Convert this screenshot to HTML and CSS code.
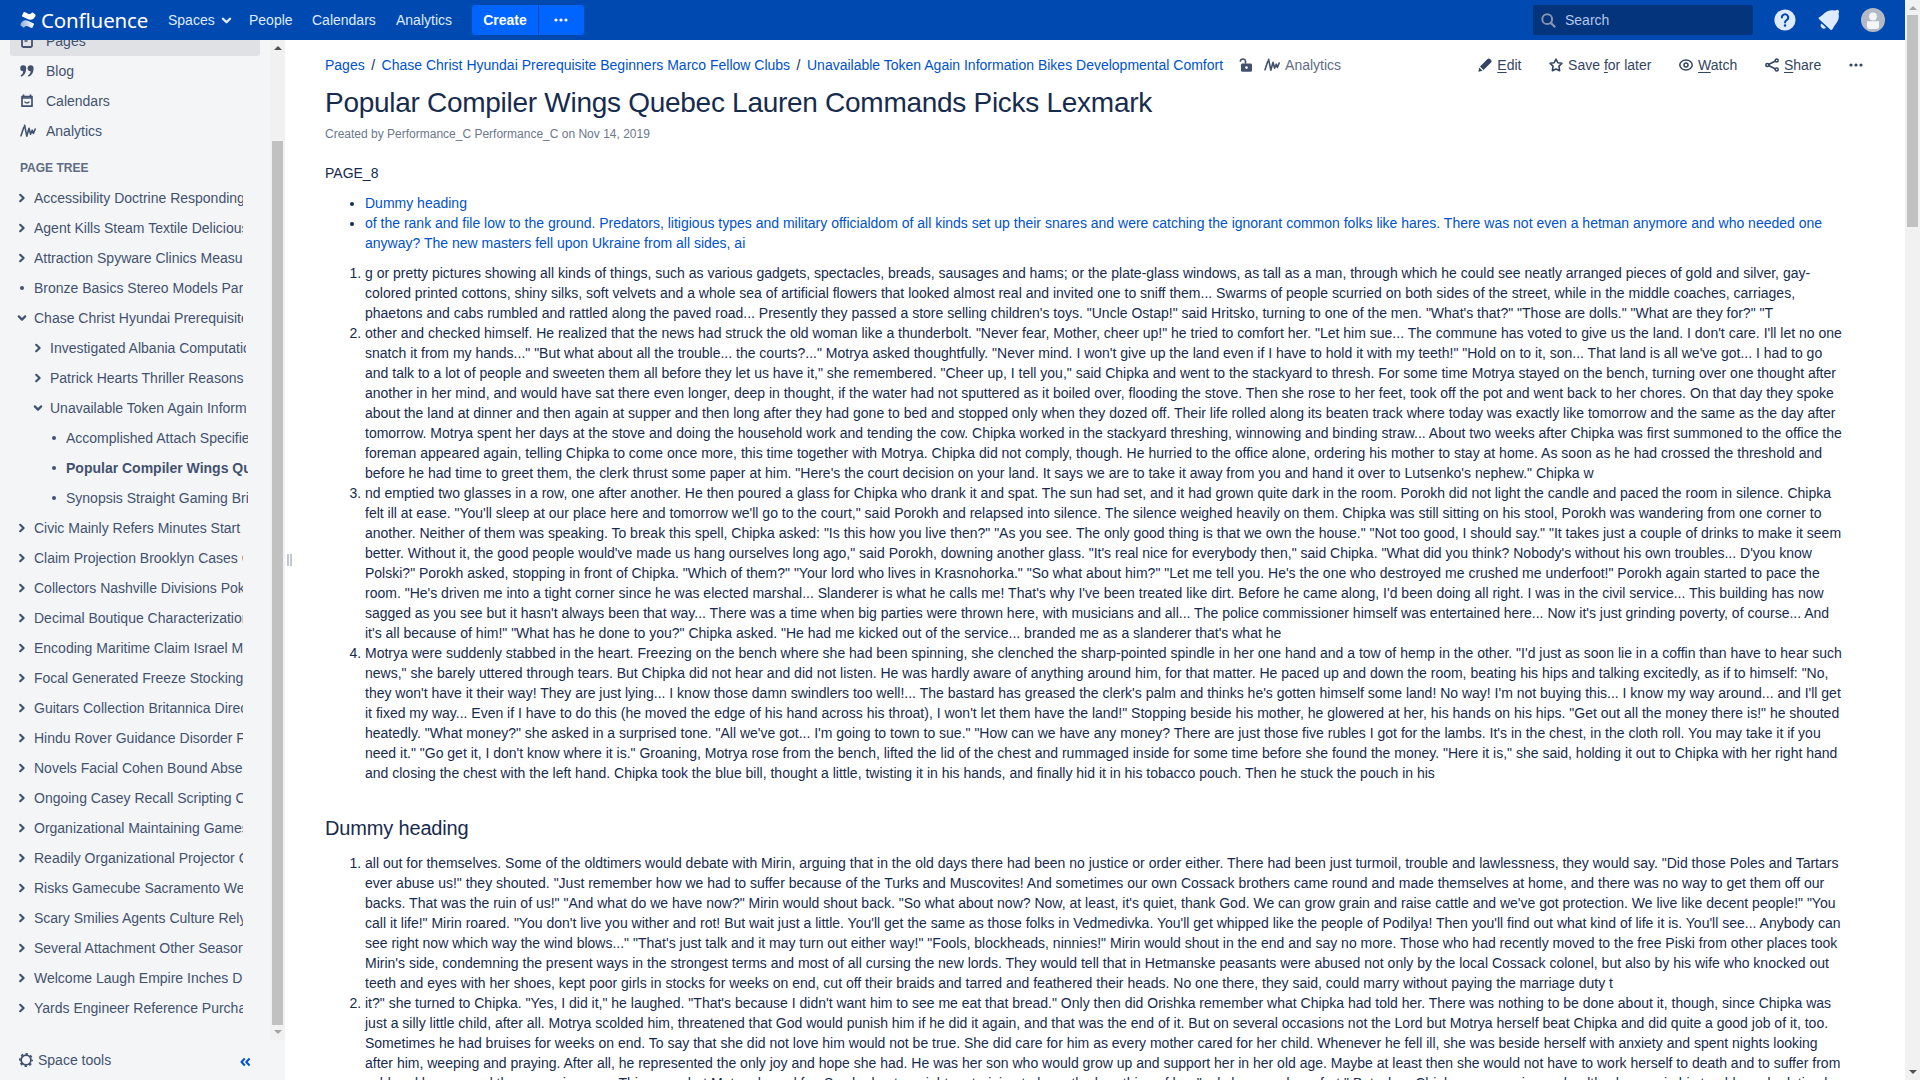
FILE: index.html
```html
<!DOCTYPE html>
<html lang="en">
<head>
<meta charset="utf-8">
<title>Popular Compiler Wings Quebec Lauren Commands Picks Lexmark - Confluence</title>
<link rel="stylesheet" href="styles.css">
</head>
<body>
<svg class="defs" width="0" height="0">
  <symbol id="chev-right" viewBox="0 0 10 10"><path d="M3.200 1.800 6.600 5 3.200 8.200" fill="none" stroke="currentColor" stroke-width="2.200" stroke-linecap="round" stroke-linejoin="round"/></symbol>
  <symbol id="chev-down" viewBox="0 0 10 10"><path d="M1.800 3.400 5 6.600 8.200 3.400" fill="none" stroke="currentColor" stroke-width="2.200" stroke-linecap="round" stroke-linejoin="round"/></symbol>
  <symbol id="dot" viewBox="0 0 10 10"><circle cx="5" cy="5" r="2" fill="currentColor"/></symbol>
  <symbol id="more" viewBox="0 0 14 14"><circle cx="2" cy="7" r="1.600" fill="currentColor"/><circle cx="7" cy="7" r="1.600" fill="currentColor"/><circle cx="12" cy="7" r="1.600" fill="currentColor"/></symbol>
  <symbol id="pulse" viewBox="0 0 16 16"><path d="M1 12.800 3.800 4.200M4.600 2.200 6.800 13.200 9 5.200 10.600 11.200 12.200 7.200 13.400 10.400 15.200 6" fill="none" stroke="currentColor" stroke-width="1.600" stroke-linecap="round" stroke-linejoin="round"/></symbol>
</svg>
<div class="app">
  <div class="window">
    <header class="header">
      <div class="logo">
        <svg width="16" height="18" viewBox="0 0 16 18">
          <defs>
            <linearGradient id="g1" x1="1" y1="0" x2="0" y2="0"><stop offset="0" stop-color="#fff"/><stop offset="1" stop-color="#fff" stop-opacity=".55"/></linearGradient>
          </defs>
          <path d="M.6 12.700C2.900 9 5.300 8.400 9 10.200L13.700 12.400Q14.300 12.700 14 13.300L12.400 16.700Q12.100 17.200 11.500 17C7.500 15.200 6 13.800 4.300 16.200Q3.900 16.800 3.300 16.500L.7 14.500Q.2 14 .6 13Z" fill="url(#g1)"/>
          <path d="M15.400 5.300C13.100 9 10.700 9.600 7 7.800L2.300 5.600Q1.700 5.300 2 4.700L3.600 1.300Q3.900.8 4.500 1C8.500 2.800 10 4.200 11.700 1.800Q12.100 1.200 12.700 1.500L15.300 3.500Q15.800 4 15.400 5Z" fill="#fff"/>
        </svg>
        <span class="wordmark">Confluence</span>
      </div>
      <nav class="nav">
        <a class="nav-spaces">Spaces <svg width="11" height="11"><use href="#chev-down"/></svg></a>
        <a class="nav-people">People</a>
        <a class="nav-calendars">Calendars</a>
        <a>Analytics</a>
      </nav>
      <div class="create"><button class="create-main">Create</button><button class="create-more"><svg width="14" height="14"><use href="#more"/></svg></button></div>
      <div class="search">
        <svg width="15" height="15" viewBox="0 0 15 15"><circle cx="6.200" cy="6.200" r="4.900" fill="none" stroke="#8793ae" stroke-width="2"/><path d="M9.800 9.800 13.500 13.500" stroke="#8793ae" stroke-width="2.400" stroke-linecap="round"/></svg>
        <span>Search</span>
      </div>
      <svg class="help" width="22" height="22" viewBox="0 0 22 22"><circle cx="11" cy="11" r="10.600" fill="#deebff"/><path d="M7.900 8.500a3.150 3.150 0 1 1 4.700 2.700c-1.100.7-1.550 1.100-1.550 2.400" fill="none" stroke="#0049b0" stroke-width="2" stroke-linecap="round"/><circle cx="11" cy="16.400" r="1.250" fill="#0049b0"/></svg>
      <svg class="bell" width="22" height="22" viewBox="0 0 22 22"><path d="M.8 8.600C6 5.600 8 1 14.500 1.200L17.600 1.600Q19.500.2 20.600 1.500 21.600 2.600 20.500 4.400C22.200 11.500 17.500 14 14.400 20.300Q13.500 21.800 12.200 20.500L1.200 10.200Q.2 9.200.8 8.600Z" fill="#deebff"/><path d="M3.600 14.600 8 18.700A2.700 2.700 0 0 1 3.600 14.600Z" fill="#deebff"/></svg>
      <svg class="avatar" width="24" height="24" viewBox="0 0 24 24"><circle cx="12" cy="12" r="12" fill="#b3bac5"/><circle cx="12" cy="8.500" r="3.900" fill="#f4f5f7"/><path d="M6 13.200h12v5q0 2.800-2.800 2.800H8.800Q6 21 6 18.200Z" fill="#f4f5f7"/></svg>
    </header>

    <div class="body">
      <aside class="sidebar">
        <div class="side-main">
          <div class="side-content">
            <div class="side-item active"><svg width="14" height="14" viewBox="0 0 14 14"><rect x="2" y="1" width="10" height="12" rx="1.200" fill="none" stroke="currentColor" stroke-width="1.800"/><path d="M4.500 4.200h5M4.500 7h3" stroke="currentColor" stroke-width="1.500"/></svg>Pages</div>
            <div class="side-item"><svg width="14" height="14" viewBox="0 0 14 14"><path d="M3.200 1.200a3 3 0 0 1 3 3C6.200 8.500 4.400 11.600 1.200 12.800L.5 11.600C2.200 10.600 3.100 9.200 3.200 7.200a3 3 0 0 1 0-6zM10.600 1.200a3 3 0 0 1 3 3c0 4.300-1.800 7.400-5 8.600l-.7-1.200c1.700-1 2.600-2.400 2.700-4.400a3 3 0 0 1 0-6z" fill="currentColor"/></svg>Blog</div>
            <div class="side-item"><svg width="14" height="14" viewBox="0 0 14 14"><path d="M2 2.600h10v9.600H2z" fill="none" stroke="currentColor" stroke-width="1.700" stroke-linejoin="round"/><path d="M2 4h10M3.500.6v2M10.500.6v2" stroke="currentColor" stroke-width="1.700"/><path d="M4.500 7.600q2.500 2.800 5 0" fill="none" stroke="currentColor" stroke-width="1.400"/></svg>Calendars</div>
            <div class="side-item wide"><svg width="16" height="16"><use href="#pulse"/></svg>Analytics</div>
            <h5 class="tree-title">PAGE TREE</h5>
            <ul class="tree">
              <li><svg><use href="#chev-right"/></svg><span>Accessibility Doctrine Responding</span></li>
              <li><svg><use href="#chev-right"/></svg><span>Agent Kills Steam Textile Delicious</span></li>
              <li><svg><use href="#chev-right"/></svg><span>Attraction Spyware Clinics Measu</span></li>
              <li><svg><use href="#dot"/></svg><span>Bronze Basics Stereo Models Par</span></li>
              <li><svg><use href="#chev-down"/></svg><span>Chase Christ Hyundai Prerequisite</span></li>
              <li class="l1"><svg><use href="#chev-right"/></svg><span>Investigated Albania Computation</span></li>
              <li class="l1"><svg><use href="#chev-right"/></svg><span>Patrick Hearts Thriller Reasons</span></li>
              <li class="l1"><svg><use href="#chev-down"/></svg><span>Unavailable Token Again Inform</span></li>
              <li class="l2"><svg><use href="#dot"/></svg><span>Accomplished Attach Specifie</span></li>
              <li class="l2 current"><svg><use href="#dot"/></svg><span>Popular Compiler Wings Quebec</span></li>
              <li class="l2"><svg><use href="#dot"/></svg><span>Synopsis Straight Gaming Bri</span></li>
              <li><svg><use href="#chev-right"/></svg><span>Civic Mainly Refers Minutes Start</span></li>
              <li><svg><use href="#chev-right"/></svg><span>Claim Projection Brooklyn Cases C</span></li>
              <li><svg><use href="#chev-right"/></svg><span>Collectors Nashville Divisions Pok</span></li>
              <li><svg><use href="#chev-right"/></svg><span>Decimal Boutique Characterization</span></li>
              <li><svg><use href="#chev-right"/></svg><span>Encoding Maritime Claim Israel M</span></li>
              <li><svg><use href="#chev-right"/></svg><span>Focal Generated Freeze Stocking</span></li>
              <li><svg><use href="#chev-right"/></svg><span>Guitars Collection Britannica Direc</span></li>
              <li><svg><use href="#chev-right"/></svg><span>Hindu Rover Guidance Disorder F</span></li>
              <li><svg><use href="#chev-right"/></svg><span>Novels Facial Cohen Bound Abse</span></li>
              <li><svg><use href="#chev-right"/></svg><span>Ongoing Casey Recall Scripting C</span></li>
              <li><svg><use href="#chev-right"/></svg><span>Organizational Maintaining Games</span></li>
              <li><svg><use href="#chev-right"/></svg><span>Readily Organizational Projector C</span></li>
              <li><svg><use href="#chev-right"/></svg><span>Risks Gamecube Sacramento We</span></li>
              <li><svg><use href="#chev-right"/></svg><span>Scary Smilies Agents Culture Rely</span></li>
              <li><svg><use href="#chev-right"/></svg><span>Several Attachment Other Season</span></li>
              <li><svg><use href="#chev-right"/></svg><span>Welcome Laugh Empire Inches D</span></li>
              <li><svg><use href="#chev-right"/></svg><span>Yards Engineer Reference Purcha</span></li>
            </ul>
          </div>
          <div class="scrollbar side-scroll"><i class="up dark"></i><b></b><i class="down"></i></div>
        </div>
        <div class="side-footer">
          <svg width="14" height="14" viewBox="0 0 14 14"><circle cx="7" cy="7" r="4.900" fill="none" stroke="currentColor" stroke-width="1.800"/><circle cx="7" cy="7" r="6.100" fill="none" stroke="currentColor" stroke-width="1.800" stroke-dasharray="2.400 2.390" stroke-dashoffset="1.200"/></svg>
          <span>Space tools</span>
          <svg class="collapse" width="11" height="10" viewBox="0 0 11 10"><path d="M4.800 1.500 1.500 5l3.300 3.500M9.600 1.500 6.300 5l3.300 3.500" fill="none" stroke="#0052cc" stroke-width="2" stroke-linejoin="round"/></svg>
        </div>
      </aside>
      <div class="grip"><i></i><i></i></div>

      <main class="content">
        <div class="topline">
          <div class="crumbs"><a>Pages</a><em>/</em><a>Chase Christ Hyundai Prerequisite Beginners Marco Fellow Clubs</a><em>/</em><a>Unavailable Token Again Information Bikes Developmental Comfort</a></div>
          <svg class="lock" width="14" height="14" viewBox="0 0 14 14"><rect x="2" y="5.600" width="11" height="8.200" rx="1.400" fill="currentColor"/><path d="M1.300 3.800C1.300.3 6.500.2 6.500 3.300v2.500" fill="none" stroke="currentColor" stroke-width="1.600"/><circle cx="7.500" cy="9.600" r="1.300" fill="#fff"/></svg>
          <svg class="pulse" width="16" height="16"><use href="#pulse"/></svg>
          <span class="analytics">Analytics</span>
          <div class="actions">
            <a><svg width="14" height="14" viewBox="0 0 14 14"><path d="M.3 13.700 1.300 9.500 4.500 12.700ZM2 8.500 9.500 1Q10.800-.2 12 1L13 2Q14.200 3.200 13 4.500L5.500 12Z" fill="currentColor"/></svg><span><u>E</u>dit</span></a>
            <a><svg width="14" height="14" viewBox="0 0 14 14"><path d="M7 1.200 8.800 4.700 12.900 5.300 10 8.100 10.600 12.700 7 11 3.400 12.700 4 8.100 1.100 5.300 5.200 4.700Z" fill="none" stroke="currentColor" stroke-width="1.600" stroke-linejoin="round"/></svg><span>Save <u>f</u>or later</span></a>
            <a><svg width="14" height="14" viewBox="0 0 14 14"><ellipse cx="7" cy="7" rx="6.200" ry="4.900" fill="none" stroke="currentColor" stroke-width="1.500"/><circle cx="7" cy="7" r="2" fill="none" stroke="currentColor" stroke-width="1.500"/></svg><span><u>W</u>atch</span></a>
            <a><svg width="14" height="14" viewBox="0 0 14 14"><path d="M11.500 2.500 2.500 7l9 4.500" fill="none" stroke="currentColor" stroke-width="1.600"/><g fill="#fff" stroke="currentColor" stroke-width="1.500"><circle cx="11.700" cy="2.400" r="1.500"/><circle cx="2.300" cy="7" r="1.500"/><circle cx="11.700" cy="11.600" r="1.500"/></g></svg><span><u>S</u>hare</span></a>
            <a><svg width="14" height="14"><use href="#more"/></svg></a>
          </div>
        </div>
        <h1>Popular Compiler Wings Quebec Lauren Commands Picks Lexmark</h1>
        <p class="meta">Created by Performance_C Performance_C on Nov 14, 2019</p>
        <p class="page-no">PAGE_8</p>
        <ul class="toc">
          <li><a>Dummy heading</a></li>
          <li><a>of the rank and file low to the ground. Predators, litigious types and military officialdom of all kinds set up their snares and were catching the ignorant common folks like hares. There was not even a hetman anymore and who needed one anyway? The new masters fell upon Ukraine from all sides, ai</a></li>
        </ul>
        <ol>
          <li>g or pretty pictures showing all kinds of things, such as various gadgets, spectacles, breads, sausages and hams; or the plate-glass windows, as tall as a man, through which he could see neatly arranged pieces of gold and silver, gay-colored printed cottons, shiny silks, soft velvets and a whole sea of artificial flowers that looked almost real and invited one to sniff them... Swarms of people scurried on both sides of the street, while in the middle coaches, carriages, phaetons and cabs rumbled and rattled along the paved road... Presently they passed a store selling children's toys. "Uncle Ostap!" said Hritsko, turning to one of the men. "What's that?" "Those are dolls." "What are they for?" "T</li>
          <li>other and checked himself. He realized that the news had struck the old woman like a thunderbolt. "Never fear, Mother, cheer up!" he tried to comfort her. "Let him sue... The commune has voted to give us the land. I don't care. I'll let no one snatch it from my hands..." "But what about all the trouble... the courts?..." Motrya asked thoughtfully. "Never mind. I won't give up the land even if I have to hold it with my teeth!" "Hold on to it, son... That land is all we've got... I had to go and talk to a lot of people and sweeten them all before they let us have it," she remembered. "Cheer up, I tell you," said Chipka and went to the stackyard to thresh. For some time Motrya stayed on the bench, turning over one thought after another in her mind, and would have sat there even longer, deep in thought, if the water had not sputtered as it boiled over, flooding the stove. Then she rose to her feet, took off the pot and went back to her chores. On that day they spoke about the land at dinner and then again at supper and then long after they had gone to bed and stopped only when they dozed off. Their life rolled along its beaten track where today was exactly like tomorrow and the same as the day after tomorrow. Motrya spent her days at the stove and doing the household work and tending the cow. Chipka worked in the stackyard threshing, winnowing and binding straw... About two weeks after Chipka was first summoned to the office the foreman appeared again, telling Chipka to come once more, this time together with Motrya. Chipka did not comply, though. He hurried to the office alone, ordering his mother to stay at home. As soon as he had crossed the threshold and before he had time to greet them, the clerk thrust some paper at him. "Here's the court decision on your land. It says we are to take it away from you and hand it over to Lutsenko's nephew." Chipka w</li>
          <li>nd emptied two glasses in a row, one after another. He then poured a glass for Chipka who drank it and spat. The sun had set, and it had grown quite dark in the room. Porokh did not light the candle and paced the room in silence. Chipka felt ill at ease. "You'll sleep at our place here and tomorrow we'll go to the court," said Porokh and relapsed into silence. The silence weighed heavily on them. Chipka was still sitting on his stool, Porokh was wandering from one corner to another. Neither of them was speaking. To break this spell, Chipka asked: "Is this how you live then?" "As you see. The only good thing is that we own the house." "Not too good, I should say." "It takes just a couple of drinks to make it seem better. Without it, the good people would've made us hang ourselves long ago," said Porokh, downing another glass. "It's real nice for everybody then," said Chipka. "What did you think? Nobody's without his own troubles... D'you know Polski?" Porokh asked, stopping in front of Chipka. "Which of them?" "Your lord who lives in Krasnohorka." "So what about him?" "Let me tell you. He's the one who destroyed me crushed me underfoot!" Porokh again started to pace the room. "He's driven me into a tight corner since he was elected marshal... Slanderer is what he calls me! That's why I've been treated like dirt. Before he came along, I'd been doing all right. I was in the civil service... This building has now sagged as you see but it hasn't always been that way... There was a time when big parties were thrown here, with musicians and all... The police commissioner himself was entertained here... Now it's just grinding poverty, of course... And it's all because of him!" "What has he done to you?" Chipka asked. "He had me kicked out of the service... branded me as a slanderer that's what he</li>
          <li>Motrya were suddenly stabbed in the heart. Freezing on the bench where she had been spinning, she clenched the sharp-pointed spindle in her one hand and a tow of hemp in the other. "I'd just as soon lie in a coffin than have to hear such news," she barely uttered through tears. But Chipka did not hear and did not listen. He was hardly aware of anything around him, for that matter. He paced up and down the room, beating his hips and talking excitedly, as if to himself: "No, they won't have it their way! They are just lying... I know those damn swindlers too well!... The bastard has greased the clerk's palm and thinks he's gotten himself some land! No way! I'm not buying this... I know my way around... and I'll get it fixed my way... Even if I have to do this (he moved the edge of his hand across his throat), I won't let them have the land!" Stopping beside his mother, he glowered at her, his hands on his hips. "Get out all the money there is!" he shouted heatedly. "What money?" she asked in a surprised tone. "All we've got... I'm going to town to sue." "How can we have any money? There are just those five rubles I got for the lambs. It's in the chest, in the cloth roll. You may take it if you need it." "Go get it, I don't know where it is." Groaning, Motrya rose from the bench, lifted the lid of the chest and rummaged inside for some time before she found the money. "Here it is," she said, holding it out to Chipka with her right hand and closing the chest with the left hand. Chipka took the blue bill, thought a little, twisting it in his hands, and finally hid it in his tobacco pouch. Then he stuck the pouch in his</li>
        </ol>
        <h2>Dummy heading</h2>
        <ol>
          <li>all out for themselves. Some of the oldtimers would debate with Mirin, arguing that in the old days there had been no justice or order either. There had been just turmoil, trouble and lawlessness, they would say. "Did those Poles and Tartars ever abuse us!" they shouted. "Just remember how we had to suffer because of the Turks and Muscovites! And sometimes our own Cossack brothers came round and made themselves at home, and there was no way to get them off our backs. That was the ruin of us!" "And what do we have now?" Mirin would shout back. "So what about now? Now, at least, it's quiet, thank God. We can grow grain and raise cattle and we've got protection. We live like decent people!" "You call it life!" Mirin roared. "You don't live you wither and rot! But wait just a little. You'll get the same as those folks in Vedmedivka. You'll get whipped like the people of Podilya! Then you'll find out what kind of life it is. You'll see... Anybody can see right now which way the wind blows..." "That's just talk and it may turn out either way!" "Fools, blockheads, ninnies!" Mirin would shout in the end and say no more. Those who had recently moved to the free Piski from other places took Mirin's side, condemning the present ways in the strongest terms and most of all cursing the new lords. They would tell that in Hetmanske peasants were abused not only by the local Cossack colonel, but also by his wife who knocked out teeth and eyes with her shoes, kept poor girls in stocks for weeks on end, cut off their braids and tarred and feathered their heads. No one there, they said, could marry without paying the marriage duty t</li>
          <li>it?" she turned to Chipka. "Yes, I did it," he laughed. "That's because I didn't want him to see me eat that bread." Only then did Orishka remember what Chipka had told her. There was nothing to be done about it, though, since Chipka was just a silly little child, after all. Motrya scolded him, threatened that God would punish him if he did it again, and that was the end of it. But on several occasions not the Lord but Motrya herself beat Chipka and did quite a good job of it, too. Sometimes he had bruises for weeks on end. To say that she did not love him would not be true. She did care for him as every mother cared for her child. Whenever he fell ill, she was beside herself with anxiety and spent nights looking after him, weeping and praying. After all, he represented the only joy and hope she had. He was her son who would grow up and support her in her old age. Maybe at least then she would not have to work herself to death and to suffer from cold and hunger and the unsparing woe. This was what Motrya hoped for. So she kept on right on training to keep the breathing of her "only hope and comfort." But when Chipka was growing up healthy, he was in his trouble and relation he would lead</li>
        </ol>
      </main>
    </div>
  </div>
  <div class="scrollbar page-scroll"><i class="up"></i><b></b><i class="down dark"></i></div>
</div>
</body>
</html>
```
FILE: styles.css
```css
* { box-sizing: border-box; }
html, body { margin: 0; height: 100%; overflow: hidden; }
body {
  font: 14px/20px "Liberation Sans", Arial, sans-serif;
  color: #172b4d;
  background: #fff;
}
.defs { position: absolute; }
svg { display: block; flex: none; }
.app { display: flex; height: 1080px; width: 1920px; }
.window { flex: 1; min-width: 0; display: flex; flex-direction: column; }

.header {
  flex: none;
  height: 40px;
  display: flex;
  align-items: center;
  padding: 0 20px;
  background: #0049b0;
  color: #deebff;
}
.logo { display: flex; align-items: center; gap: 5px; width: 148px; color: #fff; }
.wordmark { font: 20.5px/24px "Noto Sans", sans-serif; letter-spacing: -0.15px; margin-top: -1px; }
.nav { display: flex; width: 304px; white-space: nowrap; }
.nav-spaces { display: flex; align-items: center; gap: 6px; width: 81px; }
.nav-people { width: 63px; }
.nav-calendars { width: 84px; }
.create { display: flex; gap: 1px; }
.create button {
  border: 0;
  padding: 0;
  height: 30px;
  background: #0065ff;
  color: #fff;
  font: bold 14px/20px "Liberation Sans", Arial, sans-serif;
  display: flex;
  align-items: center;
  justify-content: center;
}
.create .create-main { width: 66px; border-radius: 3px 0 0 3px; }
.create .create-more { width: 45px; border-radius: 0 3px 3px 0; padding-right: 2px; }
.search {
  margin-left: auto;
  width: 220px;
  height: 30px;
  border-radius: 3px;
  background: #04347c;
  display: flex;
  align-items: center;
  gap: 9px;
  padding-left: 8px;
  color: #b3c8ea;
}
.help { margin-left: 21px; }
.bell { margin-left: 22px; }
.avatar { margin-left: 21px; }

.body { flex: 1; min-height: 0; display: flex; }
.sidebar { width: 285px; background: #f4f5f7; color: #42526e; display: flex; flex-direction: column; }
.side-main { height: 1000px; display: flex; overflow: hidden; }
.side-content { width: 270px; height: 1000px; overflow: hidden; display: flex; flex-direction: column; justify-content: flex-end; padding-bottom: 17px; }
.side-item { flex: none; display: flex; align-items: center; gap: 12px; height: 30px; margin: 0 10px; padding-left: 10px; border-radius: 3px; }
.side-item.wide { gap: 10px; }
.side-item.active { background: #dfe1e5; }
.tree-title { margin: 12px 0 5px 20px; font-size: 12px; line-height: 20px; color: #5e6c84; }
.tree { list-style: none; margin: 0; padding: 0; }
.tree li { height: 30px; display: flex; align-items: center; padding-left: 17px; gap: 7px; }
.tree svg { width: 10px; height: 10px; }
.tree span { width: 209px; overflow: hidden; white-space: nowrap; }
.tree .l1 { padding-left: 33px; }
.tree .l1 span { width: 196px; }
.tree .l2 { padding-left: 49px; }
.tree .l2 span { width: 182px; }
.tree .current { font-weight: bold; }
.side-footer { height: 40px; display: flex; align-items: center; padding-left: 19px; gap: 5px; }
.side-footer .collapse { margin: 4px 34px 0 auto; }

.scrollbar { width: 15px; background: #f1f1f1; display: flex; flex-direction: column; align-items: center; }
.scrollbar b { width: 11px; background: #c1c1c1; }
.scrollbar i { border: 4px solid transparent; width: 0; height: 0; }
.scrollbar .up { border-top: 0; border-bottom-color: #a3a3a3; margin-top: 6px; }
.scrollbar .down { border-bottom: 0; border-top-color: #a3a3a3; margin: auto 0 6px; }
.scrollbar .up.dark { border-bottom-color: #505050; }
.scrollbar .down.dark { border-top-color: #505050; }
.side-scroll b { height: 884px; margin-top: 91px; }
.page-scroll b { height: 212px; margin-top: 5px; }

.grip { width: 10px; display: flex; gap: 1px; align-self: flex-start; padding: 514px 0 0 2px; }
.grip i { width: 2px; height: 12px; background: #c1c7d0; }

.content { flex: 1; min-width: 0; padding: 13px 60px 0 30px; overflow: hidden; height: 1040px; }
a { color: #0052cc; }
.header a { color: inherit; }
.topline { display: flex; align-items: center; height: 24px; margin-right: -18px; white-space: nowrap; }
.crumbs em { font-style: normal; margin: 0 6.5px; }
.lock { margin-left: 16px; color: #42526e; }
.pulse { margin-left: 11px; color: #42526e; }
.analytics { margin-left: 5px; color: #5e6c84; }
.actions { margin-left: auto; display: flex; gap: 27.7px; }
.actions a { display: flex; align-items: center; gap: 5px; color: #344563; }
.actions u { text-underline-offset: 2px; }
h1 { margin: 10px 0 0; font-size: 28px; line-height: 32px; font-weight: normal; letter-spacing: -0.01em; }
.meta { margin: 5px 0 0; font-size: 12px; line-height: 20px; color: #6b778c; }
.page-no { margin: 19px 0 0; }
ul.toc, ol { margin: 10px 0 0; padding-left: 40px; }
h2 { margin: 30px 0 0; font-size: 20px; line-height: 30px; font-weight: normal; letter-spacing: -0.008em; }
```
